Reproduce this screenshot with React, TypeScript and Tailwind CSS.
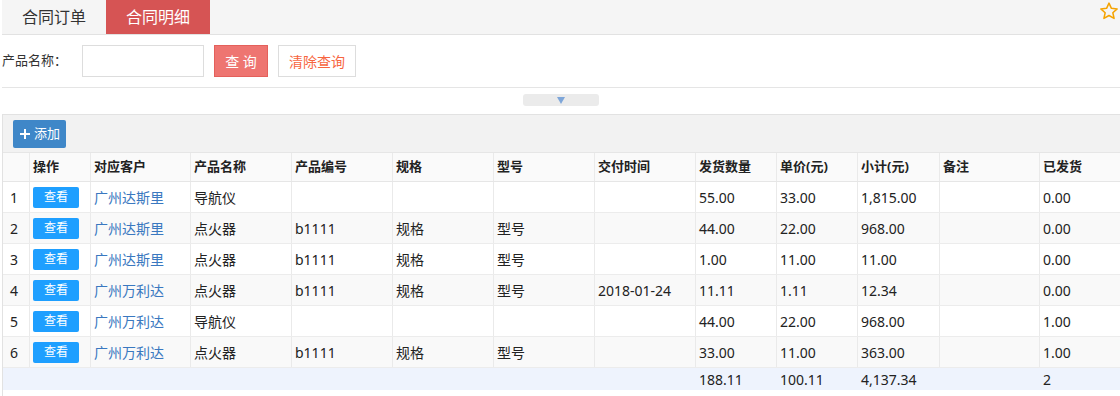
import React from "react";

const cols = [
  { key: "idx", title: "", w: "w-[26px]" },
  { key: "op", title: "操作", w: "w-[61px]" },
  { key: "cust", title: "对应客户", w: "w-[100px]" },
  { key: "name", title: "产品名称", w: "w-[101px]" },
  { key: "code", title: "产品编号", w: "w-[101px]" },
  { key: "spec", title: "规格", w: "w-[101px]" },
  { key: "model", title: "型号", w: "w-[101px]" },
  { key: "date", title: "交付时间", w: "w-[101px]" },
  { key: "qty", title: "发货数量", w: "w-[81px]" },
  { key: "price", title: "单价(元)", w: "w-[81px]" },
  { key: "sub", title: "小计(元)", w: "w-[82px]" },
  { key: "note", title: "备注", w: "w-[100px]" },
  { key: "sent", title: "已发货", w: "w-[82px]" },
];

const rows = [
  { cust: "广州达斯里", name: "导航仪", code: "", spec: "", model: "", date: "", qty: "55.00", price: "33.00", sub: "1,815.00", sent: "0.00" },
  { cust: "广州达斯里", name: "点火器", code: "b1111", spec: "规格", model: "型号", date: "", qty: "44.00", price: "22.00", sub: "968.00", sent: "0.00" },
  { cust: "广州达斯里", name: "点火器", code: "b1111", spec: "规格", model: "型号", date: "", qty: "1.00", price: "11.00", sub: "11.00", sent: "0.00" },
  { cust: "广州万利达", name: "点火器", code: "b1111", spec: "规格", model: "型号", date: "2018-01-24", qty: "11.11", price: "1.11", sub: "12.34", sent: "0.00" },
  { cust: "广州万利达", name: "导航仪", code: "", spec: "", model: "", date: "", qty: "44.00", price: "22.00", sub: "968.00", sent: "1.00" },
  { cust: "广州万利达", name: "点火器", code: "b1111", spec: "规格", model: "型号", date: "", qty: "33.00", price: "11.00", sub: "363.00", sent: "1.00" },
];

const font = { fontFamily: '"Noto Sans", "Noto Sans CJK SC", sans-serif' };

export default function App() {
  return (
    <div className="w-[1120px] h-[396px] overflow-hidden bg-white text-[#333]" style={font}>
      {/* tabs */}
      <div className="flex items-stretch h-[35px] bg-[#f5f5f5] border-b border-[#e2e2e2] ml-[2px]">
        <div className="w-[104px] flex items-center justify-center text-[16px] text-[#333]">合同订单</div>
        <div className="w-[104px] flex items-center justify-center text-[16px] text-white bg-[#d65454]">合同明细</div>
        <div className="flex-1" />
        <svg width="20" height="20" viewBox="0 0 24 24" className="mt-[1px] mr-[1px]">
          <path
            d="M12 2.5l2.9 6.3 6.9.7-5.2 4.6 1.5 6.8L12 17.4l-6.1 3.5 1.5-6.8-5.2-4.6 6.9-.7z"
            fill="none"
            stroke="#f5a300"
            strokeWidth="1.8"
            strokeLinejoin="round"
          />
        </svg>
      </div>

      {/* search */}
      <div className="ml-[2px] h-[53px] flex items-center border-b border-[#e5e5e5] text-[13px]">
        <span className="w-[80px]">产品名称：</span>
        <input className="w-[122px] h-[32px] border border-[#ddd] outline-none" />
        <button className="ml-[10px] w-[54px] h-[32px] bg-[#ee7571] border border-[#e4605b] text-white text-[14px]">查 询</button>
        <button className="ml-[10px] w-[78px] h-[32px] bg-white border border-[#ddd] text-[#f7653f] text-[14px]">清除查询</button>
      </div>

      {/* collapse handle */}
      <div className="ml-[2px] h-[26px] flex justify-center pt-[6px]">
        <div className="w-[76px] h-[12px] rounded-[3px] bg-[#ebebeb] flex items-center justify-center ml-[-1px]">
          <svg width="8" height="7" viewBox="0 0 8 7">
            <path d="M0 0h8L4 7z" fill="#7ea6d9" />
          </svg>
        </div>
      </div>

      {/* table panel */}
      <div className="ml-[2px] border-l border-t border-[#e2e2e2]">
        <div className="h-[37px] bg-[#f2f2f2] flex items-center pl-[10px]">
          <button className="h-[28px] w-[53px] rounded-[2px] bg-[#3f87c8] text-white text-[13px] flex items-center justify-center gap-[3px]">
            <svg width="12" height="12" viewBox="0 0 12 12">
              <path d="M6 1v10M1 6h10" stroke="white" strokeWidth="2" />
            </svg>
            添加
          </button>
        </div>

        <div className="flex h-[30px] bg-[#fafafa] border-y border-[#e6e6e6] text-[13px] font-bold text-[#222]">
          {cols.map((c, i) => (
            <div
              key={c.key}
              className={`${c.w} shrink-0 flex items-center px-[3px] ${i > 0 ? "border-l border-[#eaeaea]" : ""}`}
            >
              {c.title}
            </div>
          ))}
        </div>

        {rows.map((r, ri) => {
          const vals: Record<string, React.ReactNode> = {
            idx: ri + 1,
            op: (
              <span className="w-[46px] h-[21px] rounded-[2px] bg-[#1e9fff] text-white text-[12px] flex items-center justify-center">
                查看
              </span>
            ),
            cust: <span className="text-[#3a78c0]">{r.cust}</span>,
            name: r.name,
            code: r.code,
            spec: r.spec,
            model: r.model,
            date: r.date,
            qty: r.qty,
            price: r.price,
            sub: r.sub,
            note: "",
            sent: r.sent,
          };
          return (
            <div
              key={ri}
              className={`flex h-[31px] border-b border-[#ececec] text-[14px] text-[#222] ${ri % 2 === 1 ? "bg-[#f9f9f9]" : "bg-white"}`}
            >
              {cols.map((c, i) => (
                <div
                  key={c.key}
                  className={`${c.w} shrink-0 flex items-center ${i === 0 ? "justify-center pr-[4px]" : "px-[3px]"} ${i > 0 ? "border-l border-[#eaeaea]" : ""}`}
                >
                  {vals[c.key]}
                </div>
              ))}
            </div>
          );
        })}

        <div className="flex h-[22px] bg-[#eef3fd] text-[14px] text-[#222]">
          {cols.map((c) => (
            <div key={c.key} className={`${c.w} shrink-0 flex items-center px-[4px]`}>
              {c.key === "qty" ? "188.11" : c.key === "price" ? "100.11" : c.key === "sub" ? "4,137.34" : c.key === "sent" ? "2" : ""}
            </div>
          ))}
        </div>
        <div className="h-[10px]" />
      </div>
    </div>
  );
}
